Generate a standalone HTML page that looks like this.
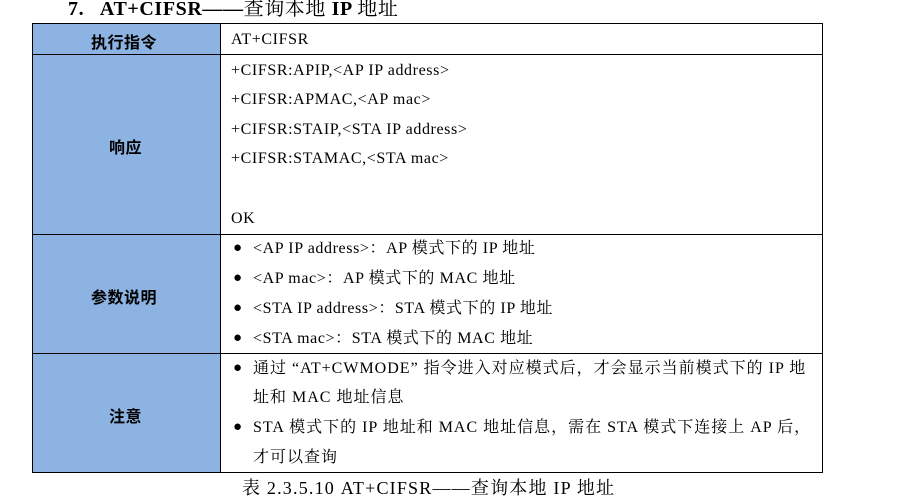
<!DOCTYPE html>
<html><head><meta charset="utf-8"><style>
body{margin:0;width:898px;height:502px;background:#fff;position:relative;overflow:hidden;font-family:"Liberation Serif","Noto Serif CJK SC",serif;color:#000}
.a{position:absolute;white-space:nowrap}
.t{font-size:16px;line-height:20px;letter-spacing:0.6px}
.c{letter-spacing:1px}
.h{font-family:"Liberation Sans","Noto Sans CJK SC",sans-serif;font-weight:bold;font-size:16px;letter-spacing:0.5px}
.b{position:absolute;background:#000}
.bu::before{content:"●";position:absolute;left:-20px;top:-1px;font-size:15px;letter-spacing:0}
</style></head><body>
<div class="a" style="left:68px;top:-3px;font-size:20px;font-weight:bold;line-height:24px;letter-spacing:0.6px">7.&nbsp;&nbsp; AT+CIFSR——<span style="font-weight:normal">查询本地</span> IP <span style="font-weight:normal">地址</span></div>
<div style="position:absolute;left:32px;top:24px;width:188px;height:449px;background:#8db3e2"></div>
<div class="b" style="left:32px;top:23px;width:791px;height:1px"></div>
<div class="b" style="left:32px;top:54px;width:791px;height:1px"></div>
<div class="b" style="left:32px;top:234px;width:791px;height:1px"></div>
<div class="b" style="left:32px;top:353px;width:791px;height:1px"></div>
<div class="b" style="left:32px;top:472px;width:791px;height:1px"></div>
<div class="b" style="left:32px;top:23px;width:1px;height:450px"></div>
<div class="b" style="left:220px;top:23px;width:1px;height:450px"></div>
<div class="b" style="left:822px;top:23px;width:1px;height:450px"></div>
<div class="a h" style="left:91px;top:29px">执行指令</div>
<div class="a h" style="left:109px;top:134px">响应</div>
<div class="a h" style="left:91px;top:284px">参数说明</div>
<div class="a h" style="left:109px;top:403px">注意</div>
<div class="a t" style="left:231px;top:30px">AT+CIFSR</div>
<div class="a t" style="left:231px;top:61px">+CIFSR:APIP,&lt;AP IP address&gt;</div>
<div class="a t" style="left:231px;top:90px">+CIFSR:APMAC,&lt;AP mac&gt;</div>
<div class="a t" style="left:231px;top:120px">+CIFSR:STAIP,&lt;STA IP address&gt;</div>
<div class="a t" style="left:231px;top:149px">+CIFSR:STAMAC,&lt;STA mac&gt;</div>
<div class="a t" style="left:231px;top:209px">OK</div>
<div class="a t bu" style="left:253px;top:239px">&lt;AP IP address&gt;：AP 模式下的 IP 地址</div>
<div class="a t bu" style="left:253px;top:269px">&lt;AP mac&gt;：AP 模式下的 MAC 地址</div>
<div class="a t bu" style="left:253px;top:299px">&lt;STA IP address&gt;：STA 模式下的 IP 地址</div>
<div class="a t bu" style="left:253px;top:329px">&lt;STA mac&gt;：STA 模式下的 MAC 地址</div>
<div class="a t c bu" style="left:253px;top:359px">通过 “AT+CWMODE” 指令进入对应模式后，才会显示当前模式下的 IP 地</div>
<div class="a t c" style="left:253px;top:388px">址和 MAC 地址信息</div>
<div class="a t c bu" style="left:253px;top:418px">STA 模式下的 IP 地址和 MAC 地址信息，需在 STA 模式下连接上 AP 后，</div>
<div class="a t c" style="left:253px;top:448px">才可以查询</div>
<div class="a" style="left:242px;top:477px;font-size:18px;line-height:22px;letter-spacing:1.2px">表 2.3.5.10 AT+CIFSR——查询本地 IP 地址</div>
</body></html>
